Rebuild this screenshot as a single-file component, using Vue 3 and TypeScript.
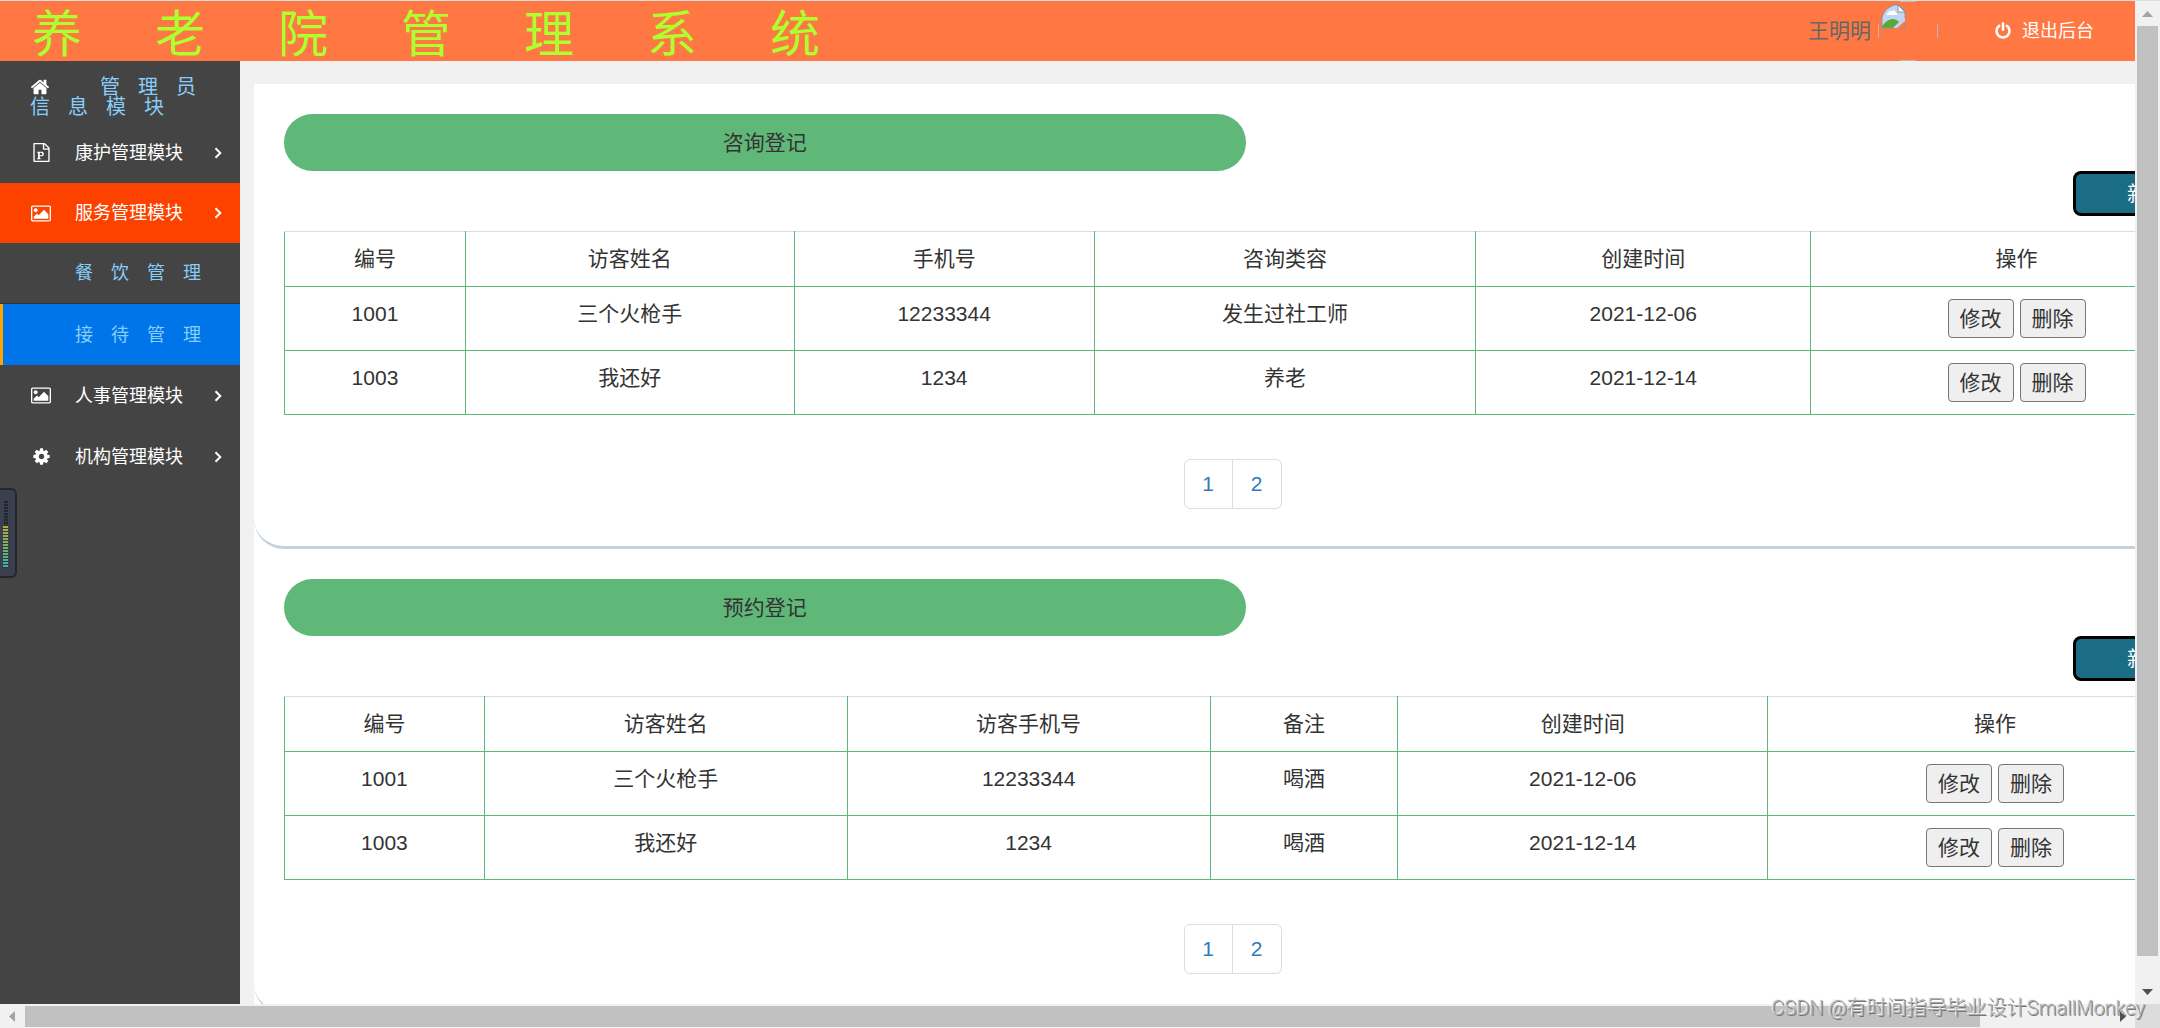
<script setup lang="ts">
interface MenuEntry {
  label: string
  icon?: 'file' | 'picture' | 'cog'
  kind: 'module' | 'child'
  state?: 'open' | 'current'
}

interface Column {
  title: string
  weight: number
}

interface RecordSection {
  title: string
  columns: Column[]
  rows: string[][]
}

const menu: MenuEntry[] = [
  { label: '康护管理模块', icon: 'file', kind: 'module' },
  { label: '服务管理模块', icon: 'picture', kind: 'module', state: 'open' },
  { label: '餐饮管理', kind: 'child' },
  { label: '接待管理', kind: 'child', state: 'current' },
  { label: '人事管理模块', icon: 'picture', kind: 'module' },
  { label: '机构管理模块', icon: 'cog', kind: 'module' },
]

const sections: RecordSection[] = [
  {
    title: '咨询登记',
    columns: [
      { title: '编号', weight: 181 },
      { title: '访客姓名', weight: 329 },
      { title: '手机号', weight: 300 },
      { title: '咨询类容', weight: 382 },
      { title: '创建时间', weight: 335 },
      { title: '操作', weight: 412 },
    ],
    rows: [
      ['1001', '三个火枪手', '12233344', '发生过社工师', '2021-12-06'],
      ['1003', '我还好', '1234', '养老', '2021-12-14'],
    ],
  },
  {
    title: '预约登记',
    columns: [
      { title: '编号', weight: 200 },
      { title: '访客姓名', weight: 363 },
      { title: '访客手机号', weight: 363 },
      { title: '备注', weight: 188 },
      { title: '创建时间', weight: 370 },
      { title: '操作', weight: 455 },
    ],
    rows: [
      ['1001', '三个火枪手', '12233344', '喝酒', '2021-12-06'],
      ['1003', '我还好', '1234', '喝酒', '2021-12-14'],
    ],
  },
]

function columnWidth(section: RecordSection, column: Column): string {
  const total = section.columns.reduce((sum, c) => sum + c.weight, 0)
  return `${(column.weight / total) * 100}%`
}
</script>

<template>
  <div class="window">
    <div class="page">
      <header class="topbar">
        <h1 class="brand">养老院管理系统</h1>
        <div class="account">
          <span class="user">王明明</span>
          <svg class="avatar" viewBox="0 0 60 60" role="img" aria-label="头像">
            <path d="M22 .5h16M22 59.5h16M.5 23v14M59.5 23v14" fill="none" stroke="#c9b5ab" />
            <path d="M4 27V16Q7 7 16 4h5l6 6v10L19 27z" fill="#c3d5f5" />
            <path d="M10 12q1-3 4-2 3-2 4 2 2 0 1 2H9q-1-2 1-2z" fill="#fff" />
            <path d="M4 27v-2q6-8 12-7 3 1 5 3l-6 6z" fill="#57a93a" />
            <path d="M4 27V16Q7 7 16 4h5l6 6v7M4 27h12M22 27h5v-5" fill="none" stroke="#8b929c" />
            <path d="M20 4v7h7z" fill="#fff" stroke="#8b929c" />
          </svg>
          <a class="logout" href="#">
            <svg viewBox="0 0 1792 1792" aria-hidden="true"><path d="M1664 896q0 156-61 298t-164 245-245 164-298 61-298-61-245-164-164-245-61-298q0-182 80.500-343t226.500-270q43-32 95.500-25t83.500 50q32 42 24.500 94.500t-49.500 84.500q-98 74-151.500 181t-53.500 228q0 104 40.500 198.500t109.500 163.500 163.500 109.500 198.500 40.500 198.500-40.500 163.500-109.500 109.500-163.500 40.500-198.500q0-121-53.500-228t-151.500-181q-42-32-49.500-84.500t24.500-94.500q31-43 84-50t95 25q146 109 226.500 270t80.500 343zm-640-768v640q0 52-38 90t-90 38-90-38-38-90v-640q0-52 38-90t90-38 90 38 38 90z" /></svg>
            <span>退出后台</span>
          </a>
        </div>
      </header>

      <div class="body">
        <nav class="sidebar">
          <a class="info-link" href="#">
            <svg viewBox="0 0 1792 1792" aria-hidden="true"><path d="M1472 992v480q0 26-19 45t-45 19h-384v-384h-256v384h-384q-26 0-45-19t-19-45v-480q0-1 .5-3t.5-3l575-474 575 474q1 2 1 6zm223-69l-62 74q-8 9-21 11h-3q-13 0-21-7l-692-577-692 577q-12 8-24 7-13-2-21-11l-62-74q-8-10-7-23.500t11-21.500l719-599q32-26 76-26t76 26l244 204v-195q0-14 9-23t23-9h192q14 0 23 9t9 23v408l219 182q10 8 11 21.500t-7 23.500z" /></svg>管理员信息模块
          </a>
          <a
            v-for="item in menu"
            :key="item.label"
            href="#"
            class="entry"
            :class="[item.kind, item.state]"
          >
            <span class="entry-icon">
              <svg v-if="item.icon === 'file'" viewBox="0 0 1792 1792" aria-hidden="true"><path fill-rule="evenodd" d="M1596 380q28 28 48 76t20 88v1152q0 40-28 68t-68 28h-1344q-40 0-68-28t-28-68v-1600q0-40 28-68t68-28h896q40 0 88 20t76 48zm-444-244v376h376q-10-29-22-41l-313-313q-12-12-41-22zm384 1528v-1024h-416q-40 0-68-28t-28-68v-416h-768v1536h1280zM480 1430v106h340v-106h-85v-170h130q75 0 118-15 62-22 99-78t37-129q0-76-38-130t-98-78q-46-16-112-16h-391v106h85v510zM735 1150v-226h106q52 0 82 18 50 26 50 94 0 72-48 96-32 18-90 18z" /></svg>
              <svg v-else-if="item.icon === 'picture'" viewBox="0 0 1920 1792" aria-hidden="true"><path d="M640 576q0 80-56 136t-136 56-136-56-56-136 56-136 136-56 136 56 56 136zm1024 384v448h-1408v-192l320-320 160 160 512-512zm96-704h-1600q-13 0-22.500 9.500t-9.500 22.500v1216q0 13 9.500 22.500t22.500 9.500h1600q13 0 22.500-9.500t9.500-22.500v-1216q0-13-9.500-22.500t-22.500-9.500zm160 32v1216q0 66-47 113t-113 47h-1600q-66 0-113-47t-47-113v-1216q0-66 47-113t113-47h1600q66 0 113 47t47 113z" /></svg>
              <svg v-else-if="item.icon === 'cog'" viewBox="0 0 1792 1792" aria-hidden="true"><path d="M1152 896q0-106-75-181t-181-75-181 75-75 181 75 181 181 75 181-75 75-181zm512-109v222q0 12-8 23t-20 13l-185 28q-19 54-39 91 35 50 107 138 10 12 10 25t-9 23q-27 37-99 108t-94 71q-12 0-26-9l-138-108q-44 23-91 38-16 136-29 186-7 28-36 28h-222q-14 0-24.500-8.500t-11.500-21.500l-28-184q-49-16-90-37l-141 107q-10 9-25 9-14 0-25-11-126-114-165-168-7-10-7-23 0-12 8-23 15-21 51-66.500t54-70.500q-27-50-41-99l-183-27q-13-2-21-12.500t-8-23.500v-222q0-12 8-23t19-13l186-28q14-46 39-92-40-57-107-138-10-12-10-24 0-10 9-23 26-36 98.500-107.500t94.500-71.500q13 0 26 10l138 107q44-23 91-38 16-136 29-186 7-28 36-28h222q14 0 24.500 8.500t11.500 21.500l28 184q49 16 90 37l142-107q9-9 24-9 13 0 25 10 129 119 165 170 7 8 7 22 0 12-8 23-15 21-51 66.500t-54 70.500q26 50 41 98l183 28q13 2 21 12.500t8 23.500z" /></svg>
            </span>
            <span class="entry-label">{{ item.label }}</span>
            <svg v-if="item.kind === 'module'" class="chevron" viewBox="0 0 8 12" aria-hidden="true"><path d="M1.500 1.200L6.300 6L1.500 10.800" /></svg>
          </a>
        </nav>

        <main class="content">
          <div class="sheet">
            <section v-for="section in sections" :key="section.title" class="panel">
              <h2 class="panel-title">{{ section.title }}</h2>
              <div class="actions">
                <button type="button" class="add">新增</button>
              </div>
              <table class="records">
                <colgroup>
                  <col
                    v-for="column in section.columns"
                    :key="column.title"
                    :style="{ width: columnWidth(section, column) }"
                  />
                </colgroup>
                <thead>
                  <tr>
                    <th v-for="column in section.columns" :key="column.title" scope="col">{{ column.title }}</th>
                  </tr>
                </thead>
                <tbody>
                  <tr v-for="row in section.rows" :key="row[0]">
                    <td v-for="(cell, i) in row" :key="i">{{ cell }}</td>
                    <td>
                      <div class="row-buttons">
                        <button type="button">修改</button>
                        <button type="button">删除</button>
                      </div>
                    </td>
                  </tr>
                </tbody>
              </table>
              <div class="pager">
                <a href="#">1</a>
                <a href="#">2</a>
              </div>
            </section>
          </div>
        </main>
      </div>

      <div class="meter" aria-hidden="true">
        <div class="meter-idle"></div>
        <div class="meter-level"></div>
      </div>
    </div>

    <div class="scroll vertical" aria-hidden="true">
      <svg class="muted" viewBox="0 0 25 25"><path d="M7 16h11l-5.500-6z" /></svg>
      <div class="track"><div class="thumb"></div><div class="rest"></div></div>
      <svg viewBox="0 0 25 25"><path d="M7 10h11l-5.500 6z" /></svg>
    </div>
    <div class="scroll horizontal" aria-hidden="true">
      <svg class="muted" viewBox="0 0 25 25"><path d="M15 7v11l-6-5.500z" /></svg>
      <div class="track"><div class="thumb"></div><div class="rest"></div></div>
      <svg viewBox="0 0 25 25"><path d="M10 7v11l6-5.500z" /></svg>
    </div>
    <div class="corner" aria-hidden="true"></div>
    <div class="watermark">CSDN @有时间指导毕业设计SmallMonkey</div>
  </div>
</template>

<style>
body {
  margin: 0;
}
</style>

<style scoped>
.window {
  position: relative;
  box-sizing: border-box;
  height: 100vh;
  border-top: 1px solid #dcdcdc;
  display: grid;
  grid-template: minmax(0, 1fr) 24px / minmax(0, 1fr) 25px;
  background: #f1f1f1;
  color: #333;
  font-family: "Liberation Sans", "Noto Sans CJK SC", sans-serif;
  font-size: 21px;
  line-height: 30px;
}

.window *,
.window *::before {
  box-sizing: border-box;
}

a {
  text-decoration: none;
}

.page {
  position: relative;
  display: flex;
  flex-direction: column;
  overflow: hidden;
}

/* top bar */
.topbar {
  flex: none;
  display: flex;
  justify-content: space-between;
  height: 60px;
  background: #ff7844;
}

.brand {
  margin: 0;
  padding-left: 32px;
  font-size: 50px;
  font-weight: 400;
  line-height: 68px;
  letter-spacing: 73px;
  white-space: nowrap;
  color: #adff2f;
}

.account {
  display: flex;
  align-items: center;
  padding-right: 41px;
}

.user {
  color: #666;
}

.avatar {
  width: 60px;
  height: 60px;
  margin: 0 56px 0 7px;
}

.logout {
  display: flex;
  align-items: center;
  gap: 10px;
  color: #fff;
  font-size: 18px;
}

.logout svg {
  width: 18px;
  height: 18px;
  fill: #fff;
}

.body {
  flex: 1;
  min-height: 0;
  display: flex;
}

/* side menu */
.sidebar {
  flex: none;
  width: 240px;
  background: #444;
}

.info-link {
  display: block;
  height: 61px;
  padding: 16px 16px 0 30px;
  font-size: 20px;
  line-height: 20px;
  letter-spacing: 18px;
  word-break: break-all;
  color: #87cefa;
}

.info-link svg {
  width: 20px;
  height: 20px;
  margin-right: 50px;
  vertical-align: top;
  fill: #fff;
}

.entry {
  display: flex;
  align-items: center;
  height: 61px;
  padding: 0 18px 0 31px;
  font-size: 18px;
  color: #fff;
}

.entry-icon {
  display: flex;
  justify-content: center;
  width: 20px;
  margin-right: 24px;
}

.entry-icon svg {
  height: 19px;
  fill: #fff;
}

.entry-label {
  flex: 1;
  white-space: nowrap;
}

.chevron {
  width: 8px;
  height: 12px;
  fill: none;
  stroke: #fff;
  stroke-width: 2;
}

.open {
  height: 60px;
  background: #fd4200;
}

.child {
  color: #87cefa;
  letter-spacing: 18px;
  padding-right: 0;
  border-bottom: 1px solid #333;
}

.current {
  padding-left: 28px;
  border-left: 3px solid #ffa500;
  border-bottom: 0;
  background: #0075ea;
}

/* records */
.content {
  flex: 1;
  min-width: 0;
  padding: 23px 0 0 14px;
  overflow: hidden;
}

.sheet {
  width: calc(100% + 118px);
  background: #fff;
}

.panel {
  padding: 30px 30px 37px;
  border-bottom: 3px solid #c6d1e0;
  border-radius: 0 0 30px 30px;
}

.panel-title {
  width: calc(50% - 8px);
  margin: 0;
  padding: 14px 0 13px;
  border-radius: 30px;
  background: #60b878;
  font-size: 21px;
  font-weight: 400;
  text-align: center;
}

.actions {
  display: flex;
  justify-content: flex-end;
  margin-bottom: 15px;
}

.add {
  width: 150px;
  height: 45px;
  padding: 0;
  border: 3px solid #000;
  border-radius: 8px;
  background: #1b6d85;
  color: #fff;
  font: inherit;
}

.records {
  width: 100%;
  table-layout: fixed;
  border-collapse: collapse;
}

.records th,
.records td {
  padding: 12px 0;
  border: 1px solid #5fb878;
  font-weight: 400;
  text-align: center;
  vertical-align: top;
}

.records th {
  border-top-color: #ddd;
}

.row-buttons {
  display: flex;
  justify-content: center;
  gap: 6px;
}

.row-buttons button {
  width: 66px;
  height: 39px;
  padding: 0;
  border: 1px solid #767676;
  border-radius: 4px;
  background: #efefef;
  color: #333;
  font: inherit;
}

.pager {
  display: flex;
  justify-content: center;
  margin-top: 44px;
  padding-right: 42px;
}

.pager a {
  width: 49px;
  padding: 9px 0;
  border: 1px solid #ddd;
  text-align: center;
  color: #337ab7;
}

.pager a:first-child {
  border-radius: 6px 0 0 6px;
}

.pager a:last-child {
  border-left: 0;
  border-radius: 0 6px 6px 0;
}

/* floating level meter docked on the left edge */
.meter {
  position: absolute;
  left: 0;
  top: 487px;
  width: 17px;
  height: 90px;
  padding: 11px 7px 10px 3px;
  border: 2px solid #23262f;
  border-left: 0;
  border-radius: 0 6px 6px 0;
  background: #3a404f;
}

.meter-idle {
  height: 25px;
  margin-left: 1px;
  background: repeating-linear-gradient(#23262f 0 2px, #3a404f 2px 3px);
}

.meter-level {
  height: 42px;
  background:
    repeating-linear-gradient(transparent 0 2px, #2c3a40 2px 3px),
    linear-gradient(#c0a936, #7fb25c 45%, #35b3a4);
}

/* scroll bars */
.scroll {
  display: flex;
  background: #f1f1f1;
}

.scroll svg {
  flex: none;
  width: 25px;
  height: 25px;
  fill: #505050;
}

.scroll .muted {
  fill: #a3a3a3;
}

.track {
  flex: 1;
  display: flex;
}

.thumb {
  background: #c1c1c1;
}

.vertical,
.vertical .track {
  flex-direction: column;
}

.vertical .thumb {
  flex: 930;
  margin: 0 2px;
}

.vertical .rest {
  flex: 23;
}

.horizontal .thumb {
  flex: 1955;
  margin: 2px 0 1px;
}

.horizontal .rest {
  flex: 130;
}

.corner {
  background: #dcdcdc;
}

.watermark {
  position: absolute;
  right: 15px;
  bottom: 5px;
  font-family: Roboto, "Noto Sans CJK SC", sans-serif;
  font-size: 20px;
  font-weight: 300;
  white-space: nowrap;
  color: #aaa;
  text-shadow: -1px -1px 0 #f4f4f4, 1px 1px 0 #777;
}
</style>
